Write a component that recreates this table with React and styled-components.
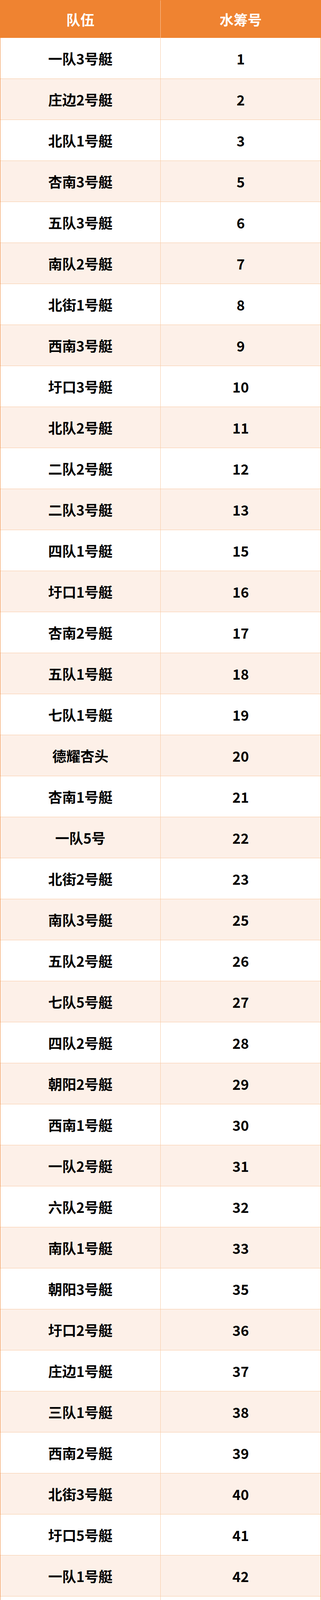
import React from 'react';
import styled, { createGlobalStyle } from 'styled-components';

const ORANGE = '#ef8331';
const PEACH_LINE = '#f8c9a3';
const STRIPE = '#fdf0e8';

const GlobalStyle = createGlobalStyle`
  * { box-sizing: border-box; }
  html, body {
    margin: 0;
    background: #ffffff;
    font-family: "Noto Sans CJK SC", "Noto Sans", sans-serif;
  }
`;

const Table = styled.div`
  width: 823px;
  border: 1px solid ${ORANGE};
  display: flex;
  flex-direction: column;
`;

const HeaderRow = styled.div`
  display: flex;
  height: 96px;
  background-color: ${ORANGE};
`;

const Row = styled.div`
  display: flex;
  height: 105px;
  background-color: ${(p) => (p.$striped ? STRIPE : '#ffffff')};
  border-bottom: 1px solid ${PEACH_LINE};

  &:last-child {
    height: 104px;
    border-bottom: none;
  }
`;

const Cell = styled.div`
  display: flex;
  align-items: center;
  justify-content: center;
  width: ${(p) => (p.$first ? '411px' : '410px')};
  border-right: ${(p) => (p.$first ? `1px solid ${PEACH_LINE}` : 'none')};
  font-size: 36px;
  font-weight: 700;
  line-height: 1;
  color: ${(p) => (p.$header ? '#ffffff' : '#000000')};
`;

const rows = [
  ['一队3号艇', 1],
  ['庄边2号艇', 2],
  ['北队1号艇', 3],
  ['杏南3号艇', 5],
  ['五队3号艇', 6],
  ['南队2号艇', 7],
  ['北街1号艇', 8],
  ['西南3号艇', 9],
  ['圩口3号艇', 10],
  ['北队2号艇', 11],
  ['二队2号艇', 12],
  ['二队3号艇', 13],
  ['四队1号艇', 15],
  ['圩口1号艇', 16],
  ['杏南2号艇', 17],
  ['五队1号艇', 18],
  ['七队1号艇', 19],
  ['德耀杏头', 20],
  ['杏南1号艇', 21],
  ['一队5号', 22],
  ['北街2号艇', 23],
  ['南队3号艇', 25],
  ['五队2号艇', 26],
  ['七队5号艇', 27],
  ['四队2号艇', 28],
  ['朝阳2号艇', 29],
  ['西南1号艇', 30],
  ['一队2号艇', 31],
  ['六队2号艇', 32],
  ['南队1号艇', 33],
  ['朝阳3号艇', 35],
  ['圩口2号艇', 36],
  ['庄边1号艇', 37],
  ['三队1号艇', 38],
  ['西南2号艇', 39],
  ['北街3号艇', 40],
  ['圩口5号艇', 41],
  ['一队1号艇', 42],
  ['三队2号艇', 43],
  ['三队3号艇', 45],
  ['庄边3号艇', 46],
  ['七队2号艇', 47],
  ['朝阳5号艇', 48],
  ['六队3号艇', 49],
  ['二队1号艇', 50],
  ['朝阳1号艇', 51],
  ['七队3号艇', 52],
  ['北街5号艇', 53],
  ['六队1号艇', 55],
];

const App = () => (
  <>
    <GlobalStyle />
    <Table>
      <HeaderRow>
        <Cell $header $first>队伍</Cell>
        <Cell $header>水筹号</Cell>
      </HeaderRow>
      {rows.map(([team, num], i) => (
        <Row key={num} $striped={i % 2 === 1}>
          <Cell $first>{team}</Cell>
          <Cell>{num}</Cell>
        </Row>
      ))}
    </Table>
  </>
);

export default App;
